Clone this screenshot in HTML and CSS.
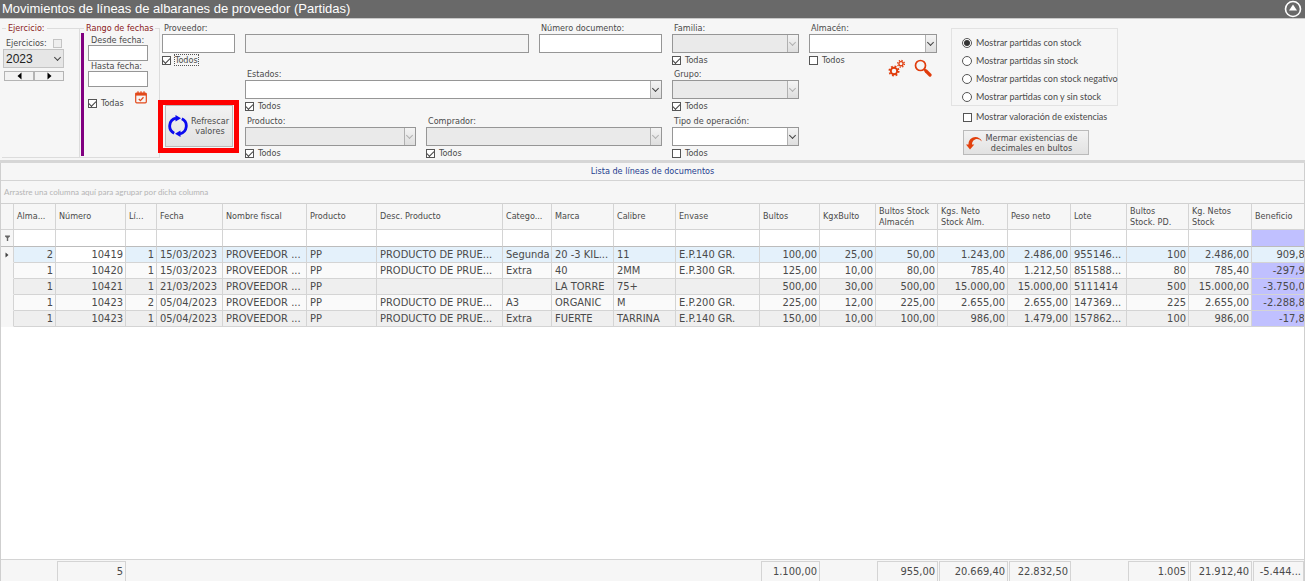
FILE: index.html
```html
<!DOCTYPE html>
<html lang="es">
<head>
    <meta charset="UTF-8">
    <meta name="viewport" content="width=device-width, initial-scale=1.0">
    <title>Movimientos de líneas de albaranes de proveedor (Partidas)</title>
    <link rel="stylesheet" href="styles.css">
</head>
<body>
    <header class="titlebar">
        <h1>Movimientos de líneas de albaranes de proveedor (Partidas)</h1>
        <button class="collapse" aria-label="Contraer filtros">
            <svg width="18" height="18" viewBox="0 0 18 18">
                <circle cx="9" cy="9" r="7.5" fill="none" stroke="#fff" stroke-width="1.6"/>
                <path d="M9 4.5 L13 10.5 H5 Z" fill="#fff"/>
            </svg>
        </button>
    </header>

    <section class="filters">
        <fieldset class="panel ejercicio">
            <legend>Ejercicio:</legend>
            <div class="line">
                <label for="ejAll">Ejercicios:</label>
                <input type="checkbox" id="ejAll" disabled>
            </div>
            <div class="combo year">
                <select id="year" aria-label="Año"><option>2023</option></select>
            </div>
            <div class="arrows">
                <button aria-label="Anterior"><svg width="5" height="8" viewBox="0 0 5 8"><path d="M4.500 0.500 V7.500 L0.500 4 Z"/></svg></button>
                <button aria-label="Siguiente"><svg width="5" height="8" viewBox="0 0 5 8"><path d="M0.500 0.500 V7.500 L4.500 4 Z"/></svg></button>
            </div>
        </fieldset>

        <fieldset class="panel rango">
            <legend>Rango de fechas</legend>
            <div class="rango-body">
                <label for="desde">Desde fecha:</label>
                <input type="text" id="desde">
                <label for="hasta">Hasta fecha:</label>
                <input type="text" id="hasta">
                <div class="todas">
                    <label class="check"><input type="checkbox" checked> Todas</label>
                    <svg width="12" height="13" viewBox="0 0 12 13" fill="none" stroke="#e2491b">
                        <rect x="0.700" y="2" width="10.600" height="9.800" rx="1" stroke-width="1.200"/>
                        <path d="M0.700 3.300 H11.300" stroke-width="2.600"/>
                        <path d="M3 0.300 V2 M6 0.300 V2 M9 0.300 V2" stroke-width="1.200"/>
                        <path d="M3.800 8 L5.400 9.600 L8.500 6.300" stroke-width="1.300"/>
                    </svg>
                </div>
            </div>
        </fieldset>

        <div class="fields">
            <div class="field proveedor">
                <label for="prov">Proveedor:</label>
                <input type="text" id="prov">
                <label class="check focused"><input type="checkbox" checked> <span>Todos</span></label>
            </div>
            <div class="field nombre">
                <input type="text" aria-label="Nombre del proveedor" readonly>
            </div>
            <div class="field">
                <label for="numdoc">Número documento:</label>
                <input type="text" id="numdoc">
            </div>
            <div class="field">
                <label for="familia">Familia:</label>
                <div class="combo off"><select id="familia" disabled></select></div>
                <label class="check"><input type="checkbox" checked> Todas</label>
            </div>
            <div class="field almacen">
                <label for="almacen">Almacén:</label>
                <div class="combo"><select id="almacen"></select></div>
                <div class="tools">
                    <label class="check"><input type="checkbox"> Todos</label>
                    <button aria-label="Configurar">
                        <svg width="18" height="18" viewBox="0 0 18 18" fill="none" stroke="#e03c0c">
                            <circle cx="6" cy="12" r="3.200" stroke-width="1.900"/>
                            <circle cx="6" cy="12" r="4.700" stroke-width="1.700" stroke-dasharray="1.850 1.840"/>
                            <circle cx="13" cy="4.800" r="2.100" stroke-width="1.300"/>
                            <circle cx="13" cy="4.800" r="3.400" stroke-width="1.300" stroke-dasharray="1.330 1.340"/>
                        </svg>
                    </button>
                    <button aria-label="Buscar">
                        <svg width="18" height="18" viewBox="0 0 18 18" fill="none" stroke="#e03c0c">
                            <circle cx="6.500" cy="6.500" r="5" stroke-width="1.700"/>
                            <path d="M10 10 L12 12" stroke-width="2"/>
                            <path d="M12 12 L16 16" stroke-width="3.200" stroke-linecap="round"/>
                        </svg>
                    </button>
                </div>
            </div>

            <div class="refresh-box">
                <button class="refresh">
                    <svg width="20" height="22" viewBox="0 0 20 22" fill="none" stroke="#0a0af0" stroke-width="2.800">
                        <path d="M6.200 18.200 A8 8 0 0 1 8 3.200"/>
                        <path d="M13.800 3.800 A8 8 0 0 1 12 18.800"/>
                        <path d="M7.500 0 L13 3.300 L7.500 6.600 Z" fill="#0a0af0" stroke="none"/>
                        <path d="M12.500 15.400 L7 18.700 L12.500 22 Z" fill="#0a0af0" stroke="none"/>
                    </svg>
                    <span>Refrescar valores</span>
                </button>
            </div>
            <div class="field wide">
                <label for="estados">Estados:</label>
                <div class="combo"><select id="estados"></select></div>
                <label class="check"><input type="checkbox" checked> Todos</label>
            </div>
            <div class="field">
                <label for="grupo">Grupo:</label>
                <div class="combo off"><select id="grupo" disabled></select></div>
                <label class="check"><input type="checkbox" checked> Todos</label>
            </div>

            <div class="pair wide">
                <div class="field">
                    <label for="producto">Producto:</label>
                    <div class="combo off"><select id="producto" disabled></select></div>
                    <label class="check"><input type="checkbox" checked> Todos</label>
                </div>
                <div class="field">
                    <label for="comprador">Comprador:</label>
                    <div class="combo off"><select id="comprador" disabled></select></div>
                    <label class="check"><input type="checkbox" checked> Todos</label>
                </div>
            </div>
            <div class="field">
                <label for="tipo">Tipo de operación:</label>
                <div class="combo"><select id="tipo"></select></div>
                <label class="check"><input type="checkbox"> Todos</label>
            </div>

            <div class="options">
                <div class="radios">
                    <label class="check"><input type="radio" name="stock" checked> Mostrar partidas con stock</label>
                    <label class="check"><input type="radio" name="stock"> Mostrar partidas sin stock</label>
                    <label class="check"><input type="radio" name="stock"> Mostrar partidas con stock negativo</label>
                    <label class="check"><input type="radio" name="stock"> Mostrar partidas con y sin stock</label>
                </div>
                <label class="check"><input type="checkbox"> Mostrar valoración de existencias</label>
                <button class="mermar">
                    <svg width="17" height="14" viewBox="0 0 17 14">
                        <path d="M16 5.500 C14 0.500 8 -0.500 4.500 3 C3 4.500 2.500 6 2.500 8.500 L0 8.500 L4 13.500 L8.300 8.500 L6 8.500 C6 3.500 11.500 0.500 16 5.500 Z" fill="#e2410e"/>
                    </svg>
                    <span>Mermar existencias de decimales en bultos</span>
                </button>
            </div>
        </div>
    </section>

    <main class="list">
        <h2>Lista de líneas de documentos</h2>
        <p class="group-hint">Arrastre una columna aquí para agrupar por dicha columna</p>
        <div class="table-area">
            <table>
                <colgroup>
                    <col class="w13"><col class="w42"><col class="w70"><col class="w31"><col class="w66">
                    <col class="w84"><col class="w70"><col class="w126"><col class="w49"><col class="w62">
                    <col class="w62"><col class="w84"><col class="w60"><col class="w56"><col class="w62">
                    <col class="w70"><col class="w63"><col class="w56"><col class="w62"><col class="w63"><col class="w62">
                </colgroup>
                <thead>
                    <tr>
                        <th></th><th>Alma...</th><th>Número</th><th>Lí...</th><th>Fecha</th><th>Nombre fiscal</th>
                        <th>Producto</th><th>Desc. Producto</th><th>Catego...</th><th>Marca</th><th>Calibre</th>
                        <th>Envase</th><th>Bultos</th><th>KgxBulto</th><th>Bultos Stock<br>Almacén</th>
                        <th>Kgs. Neto<br>Stock Alm.</th><th>Peso neto</th><th>Lote</th><th>Bultos<br>Stock. PD.</th>
                        <th>Kg. Netos<br>Stock</th><th>Beneficio</th>
                    </tr>
                    <tr class="filter-row">
                        <td class="mark"><svg width="5" height="6" viewBox="0 0 5 6"><path d="M0 0.500 H5 V1.500 L3.200 3 V6 H1.800 V3 L0 1.500 Z" fill="#666"/></svg></td>
                        <td></td><td></td><td></td><td></td><td></td><td></td><td></td><td></td><td></td><td></td>
                        <td></td><td></td><td></td><td></td><td></td><td></td><td></td><td></td><td></td><td class="ben"></td>
                    </tr>
                </thead>
                <tbody id="rows"></tbody>
            </table>
        </div>
        <footer class="totals" id="totals"></footer>
    </main>

    <script>
        const rows = [
            ['2', '10419', '1', '15/03/2023', 'PROVEEDOR ...', 'PP', 'PRODUCTO DE PRUE...', 'Segunda', '20 -3 KIL...', '11', 'E.P.140 GR.', '100,00', '25,00', '50,00', '1.243,00', '2.486,00', '955146...', '100', '2.486,00', '909,80'],
            ['1', '10420', '1', '15/03/2023', 'PROVEEDOR ...', 'PP', 'PRODUCTO DE PRUE...', 'Extra', '40', '2MM', 'E.P.300 GR.', '125,00', '10,00', '80,00', '785,40', '1.212,50', '851588...', '80', '785,40', '-297,90'],
            ['1', '10421', '1', '21/03/2023', 'PROVEEDOR ...', 'PP', '', '', 'LA TORRE', '75+', '', '500,00', '30,00', '500,00', '15.000,00', '15.000,00', '5111414', '500', '15.000,00', '-3.750,00'],
            ['1', '10423', '2', '05/04/2023', 'PROVEEDOR ...', 'PP', 'PRODUCTO DE PRUE...', 'A3', 'ORGANIC', 'M', 'E.P.200 GR.', '225,00', '12,00', '225,00', '2.655,00', '2.655,00', '147369...', '225', '2.655,00', '-2.288,80'],
            ['1', '10423', '1', '05/04/2023', 'PROVEEDOR ...', 'PP', 'PRODUCTO DE PRUE...', 'Extra', 'FUERTE', 'TARRINA', 'E.P.140 GR.', '150,00', '10,00', '100,00', '986,00', '1.479,00', '157862...', '100', '986,00', '-17,80']
        ];
        const numeric = [0, 1, 2, 11, 12, 13, 14, 15, 17, 18, 19];
        const totals = { 2: '5', 12: '1.100,00', 14: '955,00', 15: '20.669,40', 16: '22.832,50', 18: '1.005', 19: '21.912,40', 20: '-5.444...' };

        document.getElementById('rows').innerHTML = rows.map((row, r) => {
            const cells = row.map((value, i) => {
                const names = [];
                if (numeric.includes(i)) names.push('num');
                if (i === 19) names.push('ben');
                if (r === 0 && i === 1) names.push('active');
                return `<td class="${names.join(' ')}">${value}</td>`;
            }).join('');
            const mark = r === 0 ? '<svg width="4" height="6" viewBox="0 0 4 6"><path d="M0.500 0.500 L3.500 3 L0.500 5.500 Z" fill="#444"/></svg>' : '';
            return `<tr><td class="mark">${mark}</td>${cells}</tr>`;
        }).join('');

        let html = '';
        for (let i = 0; i < 21; i++) {
            html += totals[i] ? `<span class="total">${totals[i]}</span>` : '<span></span>';
        }
        document.getElementById('totals').innerHTML = html;
    </script>
</body>
</html>
```
FILE: styles.css
```css
*, *::before, *::after {
    box-sizing: border-box;
}

body {
    margin: 0;
    height: 100vh;
    display: flex;
    flex-direction: column;
    overflow: hidden;
    background: #f6f6f6;
    color: #4a4a4a;
    font-family: "DejaVu Sans Condensed", "Noto Sans", sans-serif;
    font-size: 9px;
    line-height: 10px;
}

button, input, select {
    font: inherit;
    color: inherit;
    margin: 0;
    padding: 0;
    border-radius: 0;
}

svg {
    display: block;
    flex: none;
}

.titlebar {
    display: flex;
    justify-content: space-between;
    height: 18px;
    padding: 0 3px 0 2px;
    background: #696969;
    color: white;
}
.titlebar h1 {
    margin: 0;
    font: 13px/17px "Liberation Sans", Arial, sans-serif;
}
.collapse {
    border: none;
    background: none;
}

/* filters */
.filters {
    display: flex;
    height: 145px;
    padding-top: 4px;
    border-top: 1px solid #c8c8c8;
    border-bottom: 3px solid #d6d6d6;
}

.panel {
    margin: 0 0 2px;
    padding: 0;
    min-width: 0;
    border: 1px solid #dcdcdc;
    border-left: none;
}
.panel legend {
    margin-left: 4px;
    padding: 0 2px;
    color: #8b1a1a;
}
.ejercicio {
    width: 78px;
    margin-left: 2px;
}
.line {
    display: flex;
    justify-content: space-between;
    align-items: center;
    width: 60px;
    margin: 5px 0 1px;
    padding-left: 4px;
}
.arrows {
    display: flex;
    width: 60px;
    margin: 3px 0 0 2px;
}
.arrows button {
    flex: 1;
    display: flex;
    justify-content: center;
    align-items: center;
    height: 10px;
    border: 1px solid #b4b4b4;
    background: #f2f2f2;
}

.rango {
    width: 80px;
}
.rango-body {
    display: flex;
    flex-direction: column;
    height: 123px;
    margin-left: 1px;
    padding: 2px 11px 0 4px;
    border-left: 3px solid #800080;
}
.rango-body > label {
    padding-left: 3px;
}
.todas {
    display: flex;
    justify-content: space-between;
    width: 59px;
    margin-top: 4px;
}
.todas .check {
    margin-top: 7px;
}

input[type="text"] {
    width: 100%;
    height: 19px;
    border: 1px solid #969696;
    background: white;
}
.rango-body input[type="text"] {
    width: 60px;
    height: 16px;
}
input[readonly] {
    background: #f4f4f4;
}

input[type="checkbox"],
input[type="radio"] {
    appearance: none;
    position: relative;
    flex: none;
    width: 9px;
    height: 9px;
    border: 1px solid #555;
    background: white;
}
input[type="radio"] {
    width: 10px;
    height: 10px;
    border-radius: 50%;
}
input[type="checkbox"]:disabled {
    border-color: #c4c4c4;
    background: #eee;
}
input[type="checkbox"]:checked::after {
    content: "";
    position: absolute;
    left: 0;
    top: 1px;
    width: 7px;
    height: 4px;
    border: solid #444;
    border-width: 0 0 1px 1px;
    transform: rotate(-45deg);
}
input[type="radio"]:checked::after {
    content: "";
    position: absolute;
    inset: 1px;
    border-radius: 50%;
    background: #333;
}

.check {
    display: flex;
    align-items: center;
    gap: 4px;
}

.combo {
    position: relative;
    flex: none;
    height: 19px;
}
.combo select {
    appearance: none;
    display: block;
    width: 100%;
    height: 100%;
    border: 1px solid #969696;
    background: white;
    opacity: 1;
}
.combo.off select {
    background: #eaeaea;
}
.combo::before {
    content: "";
    position: absolute;
    top: 1px;
    right: 1px;
    bottom: 1px;
    width: 11px;
    border-left: 1px solid #b0b0b0;
    background: linear-gradient(#f4f4f4, #dedede);
    pointer-events: none;
}
.combo::after {
    content: "";
    position: absolute;
    right: 4px;
    top: 6px;
    width: 5px;
    height: 5px;
    border: solid #444;
    border-width: 0 1px 1px 0;
    transform: rotate(45deg);
    pointer-events: none;
}
.combo.off::after {
    border-color: #b0b0b0;
}
.combo.year {
    width: 61px;
    margin-left: 1px;
}
.combo.year select {
    padding-left: 2px;
    border-color: #c4c4c4;
    background: #e6e6e6;
    color: #222;
    font: 12px "Liberation Sans", Arial, sans-serif;
}
.combo.year::before {
    display: none;
}

.fields {
    flex: 1;
    display: grid;
    grid-template-columns: 73px 284fr 123fr 127fr 128fr 171fr 177fr;
    grid-template-rows: 46px 47px 44px;
    column-gap: 10px;
    padding-left: 2px;
}
.field {
    display: flex;
    flex-direction: column;
    min-width: 0;
}
.field > label:first-child {
    padding-left: 2px;
    margin-bottom: 1px;
}
.field .check {
    margin-top: 2px;
}
.nombre {
    padding-top: 11px;
}
.focused span {
    outline: 1px dotted #555;
}
.wide {
    grid-column: 2 / 4;
}
.pair {
    display: grid;
    grid-template-columns: 171fr 236fr;
    gap: 10px;
}

.tools {
    display: flex;
    gap: 8px;
    padding-right: 5px;
}
.tools .check {
    margin-right: auto;
    align-self: flex-start;
}
.tools button {
    margin: 6px 0 0;
    border: none;
    background: none;
}

.refresh-box {
    position: relative;
    grid-row: 2 / 4;
    grid-column: 1;
    padding: 36px 0 0 3px;
}
.refresh-box::after {
    content: "";
    position: absolute;
    left: -4px;
    top: 31px;
    width: 81px;
    height: 53px;
    border: 5px solid #fe0000;
    pointer-events: none;
}
.refresh, .mermar {
    display: flex;
    align-items: center;
    border: 1px solid #bababa;
    background: linear-gradient(#f2f2f2, #e2e2e2);
}
.refresh {
    gap: 2px;
    width: 68px;
    height: 42px;
    padding: 0 2px;
}
.refresh span, .mermar span {
    flex: 1;
}

.options {
    grid-column: 6;
    grid-row: 1 / 4;
    min-width: 0;
    margin-left: 4px;
}
.options .check {
    font-family: Lato, "Liberation Sans", sans-serif;
    white-space: nowrap;
}
.radios {
    display: flex;
    flex-direction: column;
    gap: 8px;
    margin-top: 5px;
    padding: 9px 0 3px 10px;
    border: 1px solid #e2e2e2;
}
.options > .check {
    margin: 6px 0 8px 12px;
}
.mermar {
    width: 126px;
    height: 25px;
    margin-left: 12px;
    padding: 0 8px 0 2px;
}

/* list */
.list {
    flex: 1;
    display: flex;
    flex-direction: column;
    min-height: 0;
    border: 1px solid #cfcfcf;
    border-width: 0 1px;
}
.list h2 {
    margin: 0;
    height: 18px;
    border-bottom: 1px solid #d4d4d4;
    color: #1f3f8f;
    font-size: 9px;
    font-weight: normal;
    line-height: 17px;
    text-align: center;
}
.group-hint {
    margin: 0;
    padding-left: 3px;
    color: #b4b4b4;
    font-family: Lato, "Liberation Sans", sans-serif;
    font-size: 8px;
    line-height: 22px;
}
.table-area {
    flex: 1;
    min-height: 0;
    overflow: hidden;
    background: white;
}

table {
    width: 1312px;
    table-layout: fixed;
    border-collapse: separate;
    border-spacing: 0;
}
.w13 { width: 13px; }
.w31 { width: 31px; }
.w42 { width: 42px; }
.w49 { width: 49px; }
.w56 { width: 56px; }
.w60 { width: 60px; }
.w62 { width: 62px; }
.w63 { width: 63px; }
.w66 { width: 66px; }
.w70 { width: 70px; }
.w84 { width: 84px; }
.w126 { width: 126px; }

th, td {
    white-space: nowrap;
    text-align: left;
    border-right: 1px solid #d4d4d4;
    border-bottom: 1px solid #d4d4d4;
}
th {
    height: 27px;
    padding: 0 3px;
    border-top: 1px solid #d0d0d0;
    background: #f6f6f6;
    font-weight: normal;
    line-height: 11px;
}
td {
    height: 16px;
    padding: 0 2px 0 3px;
    font-size: 11px;
    line-height: 15px;
}
.filter-row td {
    height: 17px;
    border-bottom-color: #bcbcbc;
}
tbody tr {
    background: #fafafa;
}
tbody tr:nth-child(odd) {
    background: #efefef;
}
tbody tr:first-child {
    background: #e4f1fb;
}
.num {
    text-align: right;
}
.active {
    background: white;
}
td.mark {
    padding: 0 4px;
    background: #f6f6f6;
}
tbody .mark {
    border-bottom-color: #f6f6f6;
}
.ben {
    background: #c0c0ff;
}
tbody tr:first-child .ben {
    background: none;
}

.totals {
    display: grid;
    grid-template-columns: 13px 42px 70px 31px 66px 84px 70px 126px 49px 62px 62px 84px 60px 56px 62px 70px 63px 56px 62px 63px 1fr;
    height: 22px;
    padding-top: 1px;
    border-top: 1px solid #d4d4d4;
    font-size: 11px;
}
.total {
    margin-left: 1px;
    padding: 0 2px;
    text-align: right;
    line-height: 20px;
    border: 1px solid #d4d4d4;
    border-bottom: none;
}
```
